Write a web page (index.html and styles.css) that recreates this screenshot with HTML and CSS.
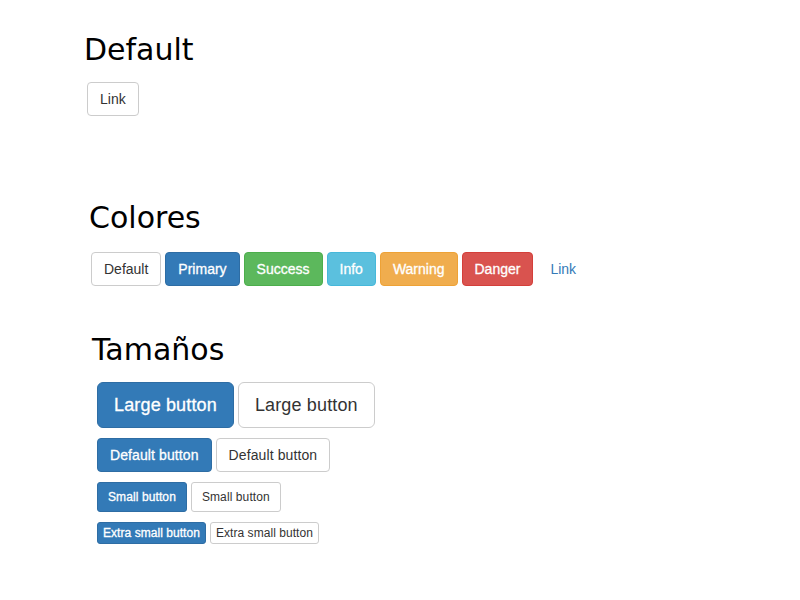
FILE: index.html
```html
<!DOCTYPE html>
<html lang="es">
<head>
<meta charset="utf-8">
<title>Botones</title>
<link rel="stylesheet" href="styles.css">
</head>
<body>
<section class="sec sec-default">
  <h2 class="title">Default</h2>
  <div class="row">
    <button class="btn btn-default">Link</button>
  </div>
</section>

<section class="sec sec-colors">
  <h2 class="title">Colores</h2>
  <div class="row">
    <button class="btn btn-default">Default</button>
    <button class="btn btn-primary">Primary</button>
    <button class="btn btn-success">Success</button>
    <button class="btn btn-info">Info</button>
    <button class="btn btn-warning">Warning</button>
    <button class="btn btn-danger">Danger</button>
    <button class="btn btn-link">Link</button>
  </div>
</section>

<section class="sec sec-sizes">
  <h2 class="title">Tamaños</h2>
  <div class="stack">
    <div class="row">
      <button class="btn btn-primary btn-lg">Large button</button>
      <button class="btn btn-default btn-lg">Large button</button>
    </div>
    <div class="row">
      <button class="btn btn-primary btn-md">Default button</button>
      <button class="btn btn-default btn-md">Default button</button>
    </div>
    <div class="row">
      <button class="btn btn-primary btn-sm">Small button</button>
      <button class="btn btn-default btn-sm">Small button</button>
    </div>
    <div class="row">
      <button class="btn btn-primary btn-xs">Extra small button</button>
      <button class="btn btn-default btn-xs">Extra small button</button>
    </div>
  </div>
</section>
</body>
</html>
```

FILE: styles.css
```css
html, body {
  margin: 0;
  padding: 0;
  background: #fff;
}

body {
  font-family: "Liberation Sans", Arial, sans-serif;
  font-size: 14px;
  line-height: 1.42857143;
  color: #333;
}

.title {
  font-family: "DejaVu Sans", Verdana, sans-serif;
  font-size: 30px;
  font-weight: normal;
  line-height: 33px;
  color: #000;
  margin: 0;
}

.row {
  display: flex;
  align-items: flex-start;
  gap: 4px;
}

.stack {
  display: flex;
  flex-direction: column;
  gap: 10px;
}

.sec-default {
  padding-top: 33px;
}
.sec-default .title {
  margin-left: 84px;
  margin-bottom: 16px;
}
.sec-default .row {
  margin-left: 87px;
}

.sec-colors {
  padding-top: 85px;
}
.sec-colors .title {
  margin-left: 89px;
  margin-bottom: 18px;
}
.sec-colors .row {
  margin-left: 91px;
}

.sec-sizes {
  padding-top: 47px;
}
.sec-sizes .title {
  margin-left: 92px;
  margin-bottom: 16px;
}
.sec-sizes .stack {
  margin-left: 97px;
}

.btn {
  display: inline-block;
  margin: 0;
  padding: 6px 12px;
  font-family: "Liberation Sans", Arial, sans-serif;
  font-size: 14px;
  font-weight: normal;
  line-height: 20px;
  text-align: center;
  white-space: nowrap;
  border: 1px solid transparent;
  border-radius: 4px;
  background: transparent;
  cursor: pointer;
}

.btn-default {
  color: #333;
  background-color: #fff;
  border-color: #ccc;
}
.btn-primary {
  color: #fff;
  background-color: #337ab7;
  border-color: #2e6da4;
}
.btn-success {
  color: #fff;
  background-color: #5cb85c;
  border-color: #4cae4c;
}
.btn-info {
  color: #fff;
  background-color: #5bc0de;
  border-color: #46b8da;
}
.btn-warning {
  color: #fff;
  background-color: #f0ad4e;
  border-color: #eea236;
}
.btn-danger {
  color: #fff;
  background-color: #d9534f;
  border-color: #d43f3a;
}
.btn-primary,
.btn-success,
.btn-info,
.btn-warning,
.btn-danger {
  -webkit-text-stroke: 0.3px #fff;
}
.btn-link {
  color: #337ab7;
  background-color: transparent;
  border-color: transparent;
}

.btn-md {
  letter-spacing: 0.1px;
}
.btn-lg {
  padding: 10px 16px;
  font-size: 18px;
  line-height: 24px;
  letter-spacing: 0.15px;
  border-radius: 6px;
}
.btn-sm {
  padding: 5px 10px;
  font-size: 12px;
  line-height: 18px;
  letter-spacing: 0.1px;
  border-radius: 3px;
}
.btn-xs {
  padding: 1px 5px;
  font-size: 12px;
  line-height: 18px;
  letter-spacing: 0.05px;
  border-radius: 3px;
}
```
